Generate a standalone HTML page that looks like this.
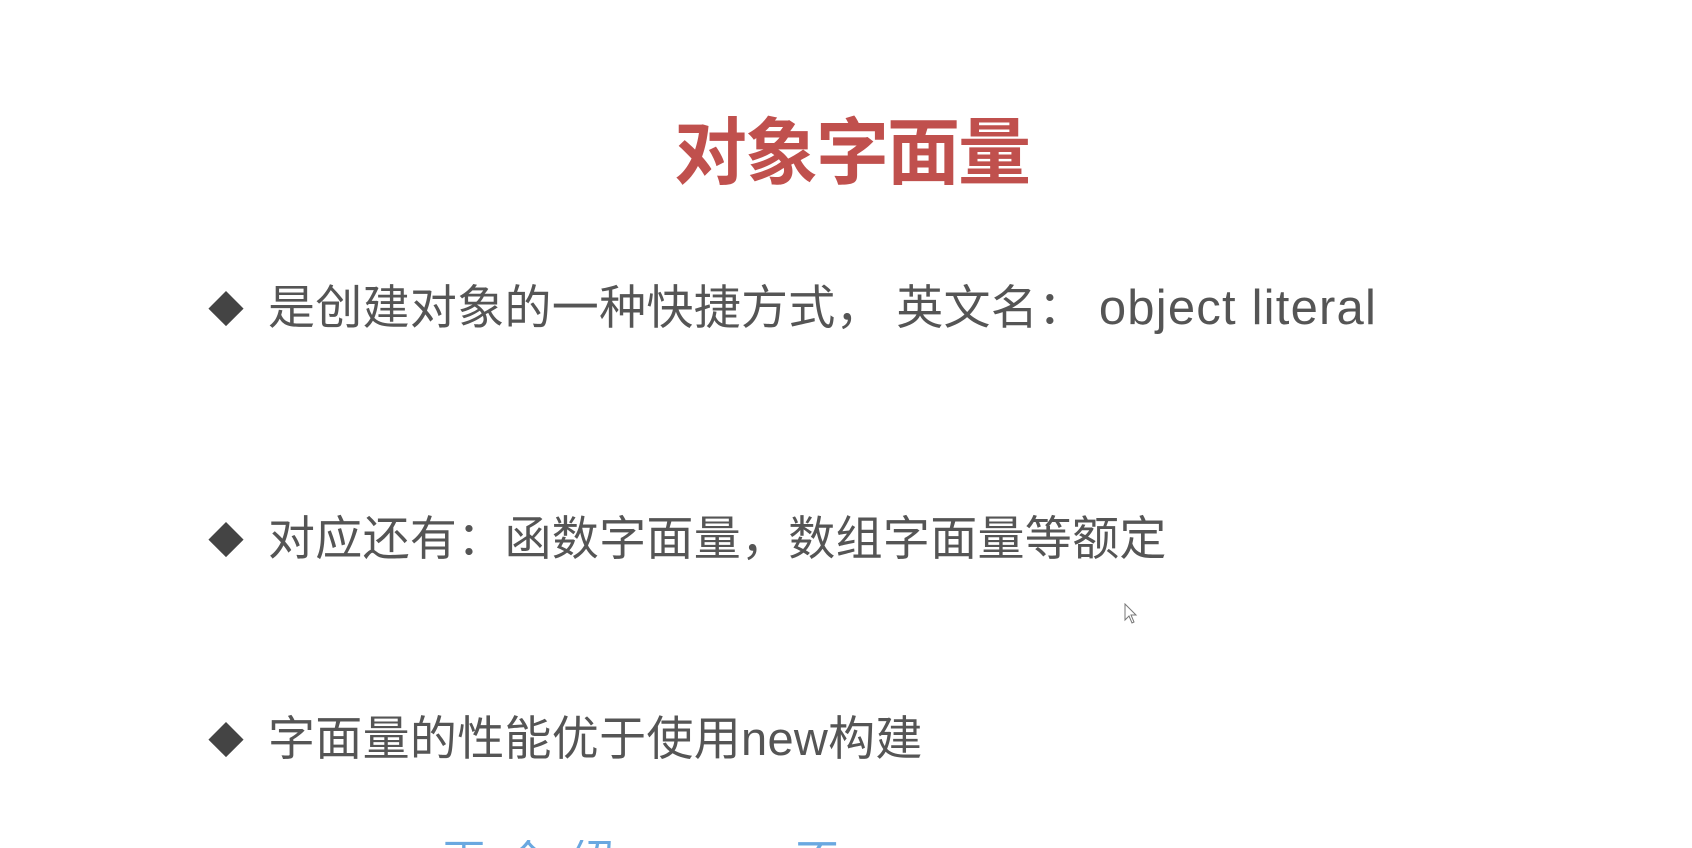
<!DOCTYPE html>
<html><head><meta charset="utf-8"><style>
html,body{margin:0;padding:0;width:1692px;height:848px;overflow:hidden;background:#fff;}
body{position:relative;font-family:"Liberation Sans","Noto Sans CJK SC",sans-serif;}
.t{position:absolute;left:674px;top:106px;font-size:73px;font-weight:bold;color:#c0504d;letter-spacing:-2px;white-space:nowrap;line-height:96px;}
.b{position:absolute;left:208px;font-size:47px;color:#555;white-space:nowrap;line-height:62px;letter-spacing:0.3px;}
.b span.d{display:inline-block;width:38px;font-size:36px;color:#444;margin-right:22px;vertical-align:2px;}
.blue{position:absolute;left:442px;top:840px;font-size:44px;line-height:44px;color:#6aa8e0;white-space:nowrap;letter-spacing:20px;height:8px;overflow:hidden;}
</style></head><body>
<div class="t">对象字面量</div>
<div class="b" style="top:277px"><span class="d">◆</span>是创建对象的一种快捷方式， 英文名： <span style="letter-spacing:1.2px;font-size:49px">object literal</span></div>
<div class="b" style="top:508px"><span class="d">◆</span>对应还有：函数字面量，数组字面量等额定</div>
<div class="b" style="top:708px"><span class="d">◆</span>字面量的性能优于使用new构建</div>
<div class="blue">再介绍 &nbsp; &nbsp; 不</div>
<svg style="position:absolute;left:1124px;top:603px" width="16" height="22" viewBox="0 0 16 22"><path d="M1 1 L1 17 L5 13 L8 20 L10 19 L7 12 L12 12 Z" fill="#fff" stroke="#777" stroke-width="1"/></svg>
</body></html>
